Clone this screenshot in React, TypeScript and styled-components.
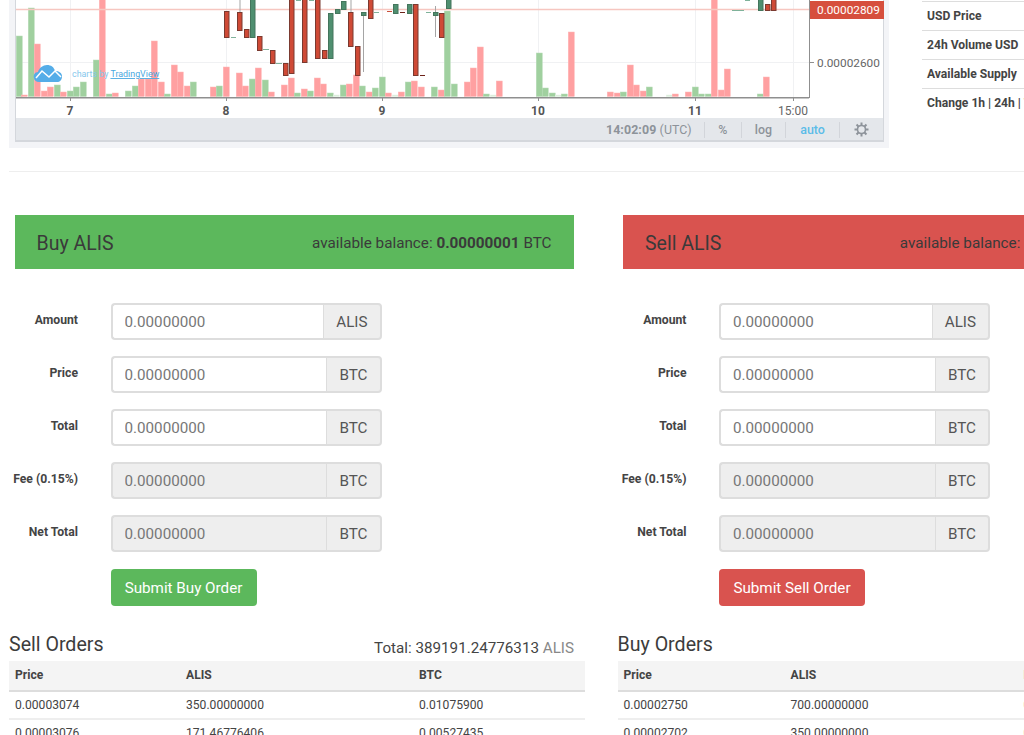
import React from "react";
import styled, { createGlobalStyle } from "styled-components";

const GlobalStyle = createGlobalStyle`
  html, body {
    margin: 0;
    background: #fff;
    font-family: Roboto, "Liberation Sans", sans-serif;
    color: #444;
  }
  * { box-sizing: border-box; }
`;

// x, top of bar, colour (g = green, p = pink, l = pale green)
const bars: [number, number, string][] = [
  [16, 36, "g"], [21, 95, "p"], [28, 8, "g"], [34, 44, "p"], [41, 91, "p"], [47, 87, "p"], [54, 85, "g"], [60, 92, "p"],
  [67, 91, "g"], [73, 87, "g"], [80, 82, "g"], [93, 60, "g"], [99, -2, "p"], [106, 94, "g"], [112, 93, "p"], [125, 91, "g"],
  [132, 86, "g"], [138, 79, "p"], [145, 79, "p"], [151, 41, "p"], [158, 82, "p"], [164, 94, "g"], [171, 65, "p"], [177, 72, "p"],
  [184, 86, "p"], [190, 82, "g"], [210, 87, "p"], [216, 86, "g"], [223, 67, "p"], [236, 73, "p"], [242, 86, "p"], [249, 79, "g"],
  [255, 68, "p"], [262, 80, "g"], [268, 92, "p"], [281, 85, "p"], [288, 78, "p"], [294, 93, "g"], [301, 89, "p"], [307, 91, "g"],
  [314, 78, "p"], [320, 84, "p"], [327, 93, "g"], [333, 95, "l"], [340, 85, "g"], [346, 84, "p"], [353, 75, "p"], [359, 86, "g"],
  [366, 92, "p"], [372, 88, "g"], [379, 77, "g"], [385, 93, "p"], [392, 95, "l"], [398, 92, "p"], [405, 82, "g"], [411, 81, "p"],
  [418, 87, "p"], [431, 87, "g"], [438, 90, "p"], [444, 11, "g"], [451, 84, "g"], [464, 82, "p"], [470, 68, "p"], [477, 47, "p"],
  [483, 94, "g"], [490, 95, "l"], [496, 81, "p"], [536, 53, "g"], [542, 88, "g"], [549, 93, "g"], [555, 95, "l"], [561, 94, "g"],
  [568, 32, "p"], [607, 92, "p"], [614, 93, "p"], [620, 92, "g"], [627, 65, "p"], [633, 85, "p"], [640, 91, "p"], [646, 87, "g"],
  [666, 95, "l"], [672, 94, "p"], [685, 92, "p"], [692, 87, "g"], [698, 94, "g"], [705, 94, "g"], [711, -2, "p"], [718, 90, "p"],
  [724, 69, "p"], [757, 94, "g"], [763, 77, "p"],
];

// x, top, bottom, colour
const candles: [number, number, number, string][] = [
  [224, 11, 37, "r"], [237, 12, 30, "r"], [244, 29, 37, "r"], [250, -2, 37, "g"], [257, 36, 50, "r"], [270, 50, 63, "r"],
  [283, 63, 75, "r"], [289, -2, 73, "r"], [302, -2, 62, "r"], [315, -2, 58, "r"], [322, 50, 58, "r"], [328, 13, 58, "g"],
  [335, 9, 13, "g"], [341, 1, 9, "g"], [348, 12, 46, "r"], [355, 46, 75, "r"], [361, 12, 15, "g"], [368, -2, 18, "r"],
  [393, 4, 13, "g"], [407, 4, 13, "g"], [413, 4, 75, "r"], [433, 12, 15, "g"], [439, 13, 37, "r"], [446, -2, 8, "g"],
  [758, -2, 10, "g"], [765, 4, 10, "r"], [771, -2, 10, "r"],
];

// x1, y1, y2
const wicks: [number, number, number][] = [
  [240, 0, 12], [351, 0, 12], [363.5, 15, 72], [435.5, 6, 37],
];

// x, y, width, colour
const ticks: [number, number, number, string][] = [
  [231, 37, 5, "#7fb29a"], [263, 49, 6, "#7fb29a"], [276, 63, 6, "#7fb29a"], [296, 0, 5, "#7fb29a"], [309, 0, 5, "#7fb29a"],
  [374, 12, 5, "#7fb29a"], [387, 11, 5, "#c9503d"], [400, 12, 5, "#6d2219"], [420, 75, 5, "#6d2219"], [426, 12, 5, "#7fb29a"],
  [732, 10, 12, "#7fb29a"], [745, 0, 5, "#7fb29a"],
];

const barFill: Record<string, string> = { g: "#a0d09f", p: "#ffa0a1", l: "#d8ecd8" };
const barEdge: Record<string, string> = { g: "#b7dcb7", p: "#ffb6b6", l: "#e6f3e6" };

const gridX = [70, 226, 382, 538, 695, 793];
const dayLabels: [number, string][] = [[70, "7"], [226, "8"], [382, "9"], [538, "10"], [695, "11"]];
const gearTeeth = [0, 45, 90, 135];

const Page = styled.div`
  width: 1024px;
  height: 735px;
  overflow: hidden;
`;

const TopRow = styled.div`
  display: flex;
  align-items: flex-start;
  gap: 33px;
  padding-left: 9px;
  width: 1300px;
`;

const ChartFrame = styled.div`
  width: 880px;
  height: 148px;
  padding: 0 5px 6px 6px;
  background: #f3f4f7;
  flex-shrink: 0;
`;

const ChartInner = styled.div`
  height: 142px;
  background: #fff;
  border-left: 1px solid #d4d7dc;
  border-right: 1px solid #d4d7dc;
  border-bottom: 2px solid #d4d7dc;
  display: flex;
  flex-direction: column;
`;

const ChartSvg = styled.svg`
  display: block;
  flex-shrink: 0;
`;

const ChartToolbar = styled.div`
  flex: 1;
  background: #e4e7eb;
  display: flex;
  align-items: center;
  justify-content: flex-end;
  padding: 1px 14px 0 0;
  font-size: 12.4px;
  font-weight: 500;
  color: #8d939a;
`;

const ToolTime = styled.span`
  margin-right: 12px;
  letter-spacing: 0.1px;
  font-weight: 700;
  & em {
    font-style: normal;
    font-weight: 400;
  }
`;

const ToolItem = styled.span<{ $active?: boolean }>`
  height: 16px;
  line-height: 16px;
  border-left: 1px solid #d2d5da;
  padding: 0 13px;
  min-width: ${(p) => (p.$active ? "54px" : "37px")};
  text-align: center;
  color: ${(p) => (p.$active ? "#5bbce8" : "#8d939a")};
`;

const ToolGear = styled.span`
  height: 16px;
  border-left: 1px solid #d2d5da;
  padding-left: 14px;
  display: flex;
  align-items: center;
`;

const StatsTable = styled.div`
  width: 340px;
  padding-top: 1px;
`;

const StatRow = styled.div`
  height: 29px;
  line-height: 29px;
  padding-left: 5px;
  border-top: 1px solid #ddd;
  font-size: 12.1px;
  font-weight: 700;
  color: #444;
  white-space: nowrap;
`;

const Divider = styled.hr`
  margin: 23px 0 43px 9px;
  border: 0;
  border-top: 1px solid #eee;
`;

const Columns = styled.div`
  display: flex;
  padding-left: 9px;
  width: 1300px;
`;

const Column = styled.div`
  width: 608.5px;
  flex-shrink: 0;
`;

const PanelHeader = styled.div<{ $tone: string }>`
  width: 559px;
  height: 54px;
  margin-left: 5.5px;
  padding: 2px 22px 0;
  background: ${(p) => p.$tone};
  display: flex;
  align-items: center;
  justify-content: space-between;
  color: #3a3a3a;
`;

const PanelTitle = styled.h3`
  margin: 0;
  font-size: 19.5px;
  font-weight: 400;
`;

const Balance = styled.span`
  font-size: 15.25px;
  white-space: nowrap;
  & b {
    font-weight: 700;
  }
`;

const OrderForm = styled.form`
  margin: 34px 0 0;
  display: flex;
  flex-direction: column;
  gap: 16px;
`;

const FormRow = styled.div`
  display: flex;
  align-items: flex-start;
  gap: 32.5px;
`;

const FormLabel = styled.label`
  width: 69px;
  flex-shrink: 0;
  padding-top: 10px;
  font-size: 12.2px;
  line-height: 15px;
  font-weight: 700;
  color: #444;
  white-space: nowrap;
  display: flex;
  justify-content: flex-end;
`;

const InputGroup = styled.div`
  width: 271px;
  height: 37px;
  display: flex;
`;

const AmountInput = styled.input`
  flex: 1;
  min-width: 0;
  height: 100%;
  padding: 0 12px;
  border: 2px solid #ddd;
  border-right: 0;
  border-radius: 4px 0 0 4px;
  font: 400 15.2px Roboto, "Liberation Sans", sans-serif;
  background: #fff;
  &:disabled {
    background: #eee;
  }
  &::placeholder {
    color: #777;
    opacity: 1;
  }
`;

const Addon = styled.span`
  padding: 0 12px;
  display: flex;
  align-items: center;
  background: #eee;
  border: 2px solid #ddd;
  border-left: 1px solid #ddd;
  border-radius: 0 4px 4px 0;
  font-size: 15.2px;
  color: #555;
`;

const SubmitButton = styled.button<{ $tone: string }>`
  margin: 1px 0 0 101.5px;
  align-self: flex-start;
  width: 146px;
  height: 37px;
  border: 0;
  border-radius: 4px;
  background: ${(p) => p.$tone};
  color: #fff;
  font: 400 15.2px Roboto, "Liberation Sans", sans-serif;
`;

const OrdersHead = styled.div`
  margin-top: 24px;
  height: 31px;
  width: 565px;
  display: flex;
  align-items: center;
  justify-content: space-between;
`;

const OrdersTitle = styled.h4`
  margin: 0;
  padding-bottom: 2px;
  font-size: 19.6px;
  font-weight: 400;
  color: #3c3c3c;
`;

const OrdersTotal = styled.span`
  font-size: 15.2px;
  color: #444;
  padding-top: 4px;
  & i {
    font-style: normal;
    color: #888;
  }
`;

const OrdersTable = styled.table`
  width: 576px;
  border-collapse: collapse;
  table-layout: fixed;
  font-size: 12.1px;
`;

const HeadCell = styled.th<{ $w: number }>`
  width: ${(p) => p.$w}px;
  height: 30px;
  padding: 0 6px 2px;
  background: #f4f4f4;
  border-bottom: 2px solid #ddd;
  text-align: left;
  font-weight: 700;
  font-size: 12.1px;
  color: #444;
`;

const Cell = styled.td`
  height: 28px;
  padding: 0 6px 1px;
  border-bottom: 2px solid #eee;
  color: #444;
`;

const Chart = () => (
  <ChartSvg width={868} height={118} viewBox="16 0 868 118">
    {gridX.map((x) => (
      <line key={x} x1={x + 0.5} x2={x + 0.5} y1={0} y2={97} stroke="#f0f1f3" />
    ))}
    <line x1={16} x2={809} y1={62.5} y2={62.5} stroke="#f0f1f3" />
    {bars.map(([x, top, c]) => (
      <rect key={x} x={x + 0.25} y={top} width={6} height={96.5 - top} fill={barFill[c]} stroke={barEdge[c]} strokeWidth={0.5} />
    ))}
    <line x1={16} x2={809} y1={9.5} y2={9.5} stroke="#f6c6c0" strokeWidth={1.5} />
    {wicks.map(([x, a, b]) => (
      <line key={x} x1={x} x2={x} y1={a} y2={b} stroke="#a5a5a5" />
    ))}
    {ticks.map(([x, y, w, c]) => (
      <line key={`${x}-${y}`} x1={x} x2={x + w} y1={y + 0.5} y2={y + 0.5} stroke={c} />
    ))}
    {candles.map(([x, top, bottom, c]) => (
      <rect
        key={x}
        x={x + 0.5}
        y={top + 0.5}
        width={4.5}
        height={bottom - top}
        fill={c === "r" ? "#cf4a36" : "#4f8f70"}
        stroke={c === "r" ? "#7a3a30" : "#44755c"}
      />
    ))}
    <path
      d="M34 78c-1-3 1-6 4-6 1-4 5-7 9-7 4 0 7 2 8 6 4 0 7 2 7 5 0 4-2 6-5 6H39c-3 0-5-2-5-4z"
      fill="#55ade8"
    />
    <path d="M36 78l6-7 7 6 6-6 6 6" fill="none" stroke="#fff" strokeWidth={1.5} />
    <text x={72} y={77} fontSize={8.9} fill="#85c8ec">
      charts by{" "}
      <tspan fill="#4aa8e0" textDecoration="underline">
        TradingView
      </tspan>
    </text>
    <line x1={16} x2={809} y1={97.75} y2={97.75} stroke="#8f8f8f" strokeWidth={1.5} />
    <line x1={809.5} x2={809.5} y1={0} y2={98} stroke="#8f8f8f" />
    {gridX.map((x) => (
      <line key={x} x1={x + 0.5} x2={x + 0.5} y1={98} y2={101} stroke="#8f8f8f" />
    ))}
    {dayLabels.map(([x, t]) => (
      <text key={t} x={x} y={115} textAnchor="middle" fontSize={12} fontWeight={700} fill="#555">
        {t}
      </text>
    ))}
    <text x={793} y={115} textAnchor="middle" fontSize={12} fill="#666">
      15:00
    </text>
    <rect x={810} y={1} width={74} height={18} fill="#d64f3d" />
    <text x={817} y={14} fontSize={11.8} fill="#fff">
      0.00002809
    </text>
    <line x1={810} x2={814} y1={62.5} y2={62.5} stroke="#8f8f8f" />
    <text x={817} y={67} fontSize={11.8} fill="#666">
      0.00002600
    </text>
  </ChartSvg>
);

const GearIcon = () => (
  <svg width={15} height={15} viewBox="0 0 15 15" fill="none" stroke="#8d939a">
    <circle cx={7.5} cy={7.5} r={4} strokeWidth={1.6} />
    {gearTeeth.map((a) => (
      <line key={a} x1={7.5} x2={7.5} y1={0.5} y2={14.5} strokeWidth={2} transform={`rotate(${a} 7.5 7.5)`} strokeDasharray="3 8 3" />
    ))}
  </svg>
);

const fields = [
  { label: "Amount", unit: "ALIS", disabled: false },
  { label: "Price", unit: "BTC", disabled: false },
  { label: "Total", unit: "BTC", disabled: false },
  { label: "Fee (0.15%)", unit: "BTC", disabled: true },
  { label: "Net Total", unit: "BTC", disabled: true },
];

type TradeProps = { side: string; tone: string; balance: string; unit: string };

const Trade = ({ side, tone, balance, unit }: TradeProps) => (
  <>
    <PanelHeader $tone={tone}>
      <PanelTitle>{side} ALIS</PanelTitle>
      <Balance>
        available balance: <b>{balance}</b> {unit}
      </Balance>
    </PanelHeader>
    <OrderForm>
      {fields.map((f) => (
        <FormRow key={f.label}>
          <FormLabel>{f.label}</FormLabel>
          <InputGroup>
            <AmountInput placeholder="0.00000000" disabled={f.disabled} />
            <Addon>{f.unit}</Addon>
          </InputGroup>
        </FormRow>
      ))}
      <SubmitButton type="button" $tone={tone}>
        Submit {side} Order
      </SubmitButton>
    </OrderForm>
  </>
);

const Orders = ({ widths, rows }: { widths: number[]; rows: string[][] }) => (
  <OrdersTable>
    <thead>
      <tr>
        {["Price", "ALIS", "BTC"].map((h, i) => (
          <HeadCell key={h} $w={widths[i]}>
            {h}
          </HeadCell>
        ))}
      </tr>
    </thead>
    <tbody>
      {rows.map((r) => (
        <tr key={r[0]}>
          {r.map((c) => (
            <Cell key={c}>{c}</Cell>
          ))}
        </tr>
      ))}
    </tbody>
  </OrdersTable>
);

export default function App() {
  return (
    <Page>
      <GlobalStyle />
      <TopRow>
        <ChartFrame>
          <ChartInner>
            <Chart />
            <ChartToolbar>
              <ToolTime>
                14:02:09 <em>(UTC)</em>
              </ToolTime>
              <ToolItem>%</ToolItem>
              <ToolItem>log</ToolItem>
              <ToolItem $active>auto</ToolItem>
              <ToolGear>
                <GearIcon />
              </ToolGear>
            </ChartToolbar>
          </ChartInner>
        </ChartFrame>
        <StatsTable>
          <StatRow>USD Price</StatRow>
          <StatRow>24h Volume USD</StatRow>
          <StatRow>Available Supply</StatRow>
          <StatRow>Change 1h | 24h | 7d</StatRow>
        </StatsTable>
      </TopRow>
      <Divider />
      <Columns>
        <Column>
          <Trade side="Buy" tone="#5cb85c" balance="0.00000001" unit="BTC" />
          <OrdersHead>
            <OrdersTitle>Sell Orders</OrdersTitle>
            <OrdersTotal>
              Total: 389191.24776313 <i>ALIS</i>
            </OrdersTotal>
          </OrdersHead>
          <Orders
            widths={[171, 233, 172]}
            rows={[
              ["0.00003074", "350.00000000", "0.01075900"],
              ["0.00003076", "171.46776406", "0.00527435"],
            ]}
          />
        </Column>
        <Column>
          <Trade side="Sell" tone="#d9534f" balance="100.00000000" unit="ALIS" />
          <OrdersHead>
            <OrdersTitle>Buy Orders</OrdersTitle>
          </OrdersHead>
          <Orders
            widths={[167, 233, 176]}
            rows={[
              ["0.00002750", "700.00000000", "0.01925000"],
              ["0.00002702", "350.00000000", "0.00945700"],
            ]}
          />
        </Column>
      </Columns>
    </Page>
  );
}
